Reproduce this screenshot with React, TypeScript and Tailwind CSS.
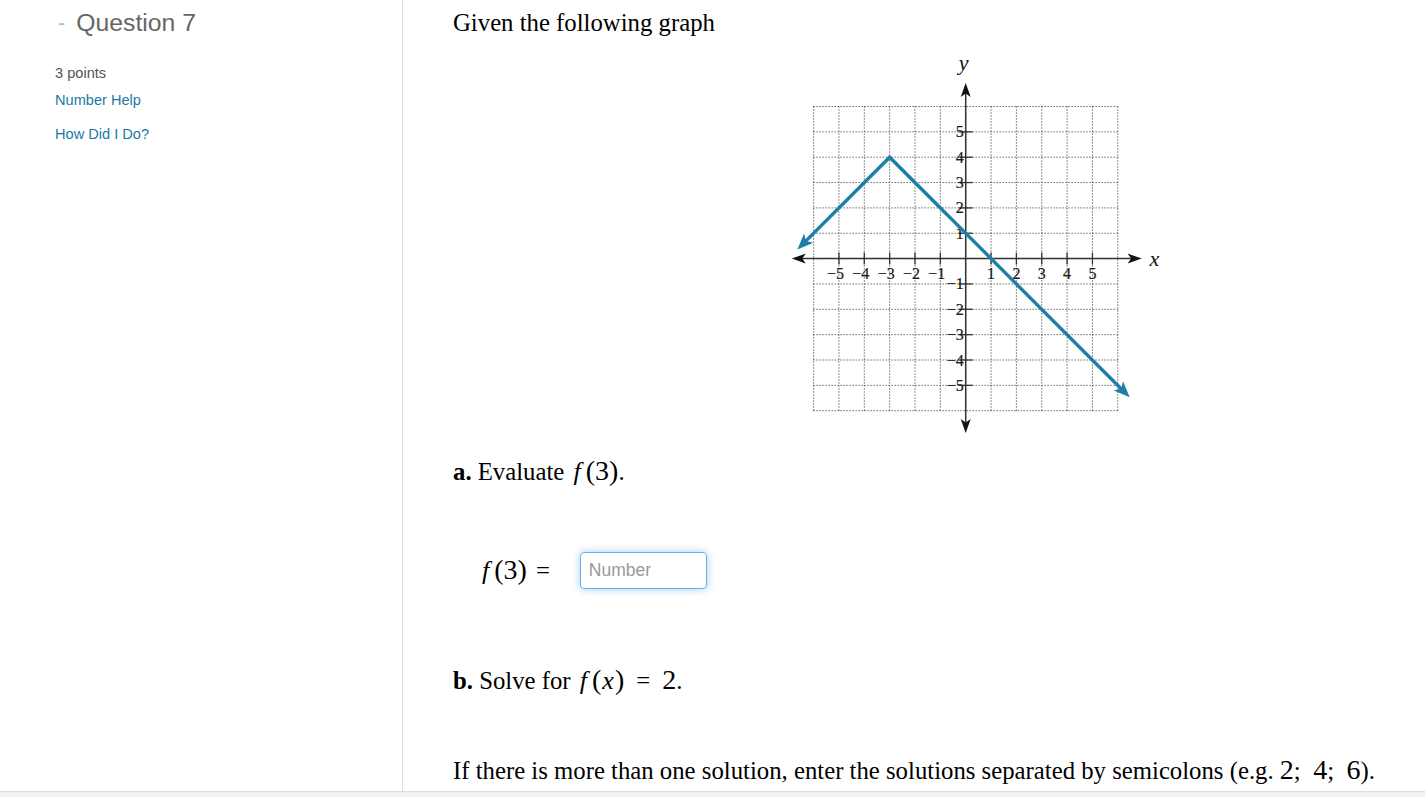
import React from "react";

const OX = 180.7;
const OY = 208.6;
const U = 25.35;
const px = (x: number) => OX + x * U;
const py = (y: number) => OY - y * U;
const BLUE = "#1d7ea6";

function arrowHead(tx: number, ty: number, dx: number, dy: number, len: number, half: number) {
  const l = Math.hypot(dx, dy);
  const ux = dx / l;
  const uy = dy / l;
  const bx = tx - ux * len;
  const by = ty - uy * len;
  const nx = -uy;
  const ny = ux;
  return `${tx},${ty} ${bx + nx * half},${by + ny * half} ${bx + ux * len * 0.25},${by + uy * len * 0.25} ${bx - nx * half},${by - ny * half}`;
}

function Graph() {
  const ints = [-6, -5, -4, -3, -2, -1, 0, 1, 2, 3, 4, 5, 6];
  const labels = [-5, -4, -3, -2, -1, 1, 2, 3, 4, 5];
  const serif = "'Liberation Serif', 'Times New Roman', serif";

  const lx = -6.64;
  const ly = 0.36;
  const rx = 6.47;
  const ry = -5.47;

  return (
    <svg width="390" height="390" viewBox="0 0 390 390" className="block">
      {/* dotted grid */}
      {ints.map((i) => (
        <line key={"v" + i} x1={px(i)} y1={py(6)} x2={px(i)} y2={py(-6)} stroke="#222" strokeWidth="1" strokeDasharray="1 2" />
      ))}
      {ints.map((i) => (
        <line key={"h" + i} x1={px(-6)} y1={py(i)} x2={px(6)} y2={py(i)} stroke="#222" strokeWidth="1" strokeDasharray="1 2" />
      ))}

      {/* axes */}
      <line x1={px(-6.6)} y1={OY} x2={px(6.7)} y2={OY} stroke="#333" strokeWidth="1.5" />
      <line x1={OX} y1={py(6.7)} x2={OX} y2={py(-6.6)} stroke="#333" strokeWidth="1.5" />
      <polygon points={arrowHead(px(6.94), OY, 1, 0, 14, 5)} fill="#111" />
      <polygon points={arrowHead(px(-6.86), OY, -1, 0, 14, 5)} fill="#111" />
      <polygon points={arrowHead(OX, py(6.93), 0, -1, 14, 5)} fill="#111" />
      <polygon points={arrowHead(OX, py(-6.88), 0, 1, 14, 5)} fill="#111" />

      {/* ticks */}
      {labels.map((i) => (
        <line key={"tx" + i} x1={px(i)} y1={OY - 6} x2={px(i)} y2={OY + 6} stroke="#333" strokeWidth="1.3" />
      ))}
      {labels.map((i) => (
        <line key={"ty" + i} x1={OX - 7} y1={py(i)} x2={OX + 7} y2={py(i)} stroke="#333" strokeWidth="1.3" />
      ))}

      {/* tick labels */}
      {labels.map((i) => (
        <text key={"lx" + i} x={px(i) - (i < 0 ? 3.5 : 0)} y={OY + 20} fontFamily={serif} fontSize="16" textAnchor="middle" fill="#1a1a1a" stroke="#1a1a1a" strokeWidth="0.2">
          {i < 0 ? "\u2212" + Math.abs(i) : String(i)}
        </text>
      ))}
      {labels.map((i) => (
        <text key={"ly" + i} x={OX - 2} y={py(i) + 5.5} fontFamily={serif} fontSize="16" textAnchor="end" fill="#1a1a1a" stroke="#1a1a1a" strokeWidth="0.2">
          {i < 0 ? "\u2212" + Math.abs(i) : String(i)}
        </text>
      ))}

      {/* axis names */}
      <text x={px(7.25)} y={OY + 7} fontFamily={serif} fontSize="22" fontStyle="italic" fill="#111">x</text>
      <text x={OX - 7} y={py(7.45)} fontFamily={serif} fontSize="22" fontStyle="italic" fill="#111">y</text>

      {/* function */}
      <polyline
        points={`${px(lx + 0.25)},${py(ly + 0.25)} ${px(-3)},${py(4)} ${px(rx - 0.25)},${py(ry + 0.25)}`}
        fill="none"
        stroke={BLUE}
        strokeWidth="3.4"
        strokeLinejoin="miter"
      />
      <polygon points={arrowHead(px(lx), py(ly), -1, 1, 16, 6.5)} fill={BLUE} />
      <polygon points={arrowHead(px(rx), py(ry), 1, 1, 16, 6.5)} fill={BLUE} />
    </svg>
  );
}

function F() {
  return <span className="italic text-[26px] ml-[3px] mr-[5px]">f</span>;
}

function Mn({ children }: { children: React.ReactNode }) {
  return <span className="text-[28px]">{children}</span>;
}

export default function App() {
  return (
    <div className="w-[1425px] h-[797px] overflow-hidden bg-white flex flex-col">
      <div className="flex flex-1 min-h-0">
        {/* LEFT */}
        <div className="w-[403px] shrink-0 border-r border-[#dddddd] pl-[58px] pt-[9px] font-['Liberation_Sans',Arial,sans-serif]">
          <div className="flex items-center h-[28px]">
            <span className="text-[#bbbbbb] text-[22px] mr-[11px] leading-none">-</span>
            <span className="text-[24.75px] text-[#666666] leading-none">Question 7</span>
          </div>
          <div className="-ml-[3px] mt-[27px] text-[14.6px] text-[#555555] leading-[18px]">3 points</div>
          <div className="-ml-[3px] mt-[9px] text-[14.6px] text-[#1a7aa3] leading-[18px]">Number Help</div>
          <div className="-ml-[3px] mt-[16px] text-[14.6px] text-[#1a7aa3] leading-[18px]">How Did I Do?</div>
        </div>

        {/* RIGHT */}
        <div className="flex-1 pl-[50px] pt-[10px] font-['Liberation_Serif','Times_New_Roman',serif] text-[24.75px] text-black leading-[26px]">
          <div>Given the following graph</div>
          <div className="ml-[332px] mt-[14px]">
            <Graph />
          </div>
          <div className="mt-[18px]">
            <span className="font-bold">a.</span> Evaluate <F />
            <Mn>(3)</Mn>.
          </div>
          <div className="mt-[67px] ml-[26px] flex items-center gap-[30px]">
            <span>
              <F />
              <Mn>(3)</Mn>
              <span className="ml-[9px]">=</span>
            </span>
            <input
              placeholder="Number"
              className="w-[127px] h-[37px] rounded-[4px] border border-[#66afe9] shadow-[0_0_8px_rgba(102,175,233,0.6)] px-[8px] text-[17.5px] font-['Liberation_Sans',Arial,sans-serif] placeholder:text-[#999999] outline-none"
            />
          </div>
          <div className="mt-[78px]">
            <span className="font-bold">b.</span> Solve for <F />
            <Mn>(</Mn>
            <span className="italic text-[26px] mx-[1px]">x</span>
            <Mn>)</Mn>
            <span className="mx-[12px]">=</span>
            <Mn>2</Mn>.
          </div>
          <div className="mt-[63px]">
            If there is more than one solution, enter the solutions separated by semicolons (e.g. <Mn>2</Mn>;&nbsp;&nbsp;<Mn>4</Mn>;&nbsp;&nbsp;<Mn>6</Mn>).
          </div>
        </div>
      </div>
      <div className="h-[6px] shrink-0 bg-[#f1f1f1] border-t border-[#dddddd]" />
    </div>
  );
}
